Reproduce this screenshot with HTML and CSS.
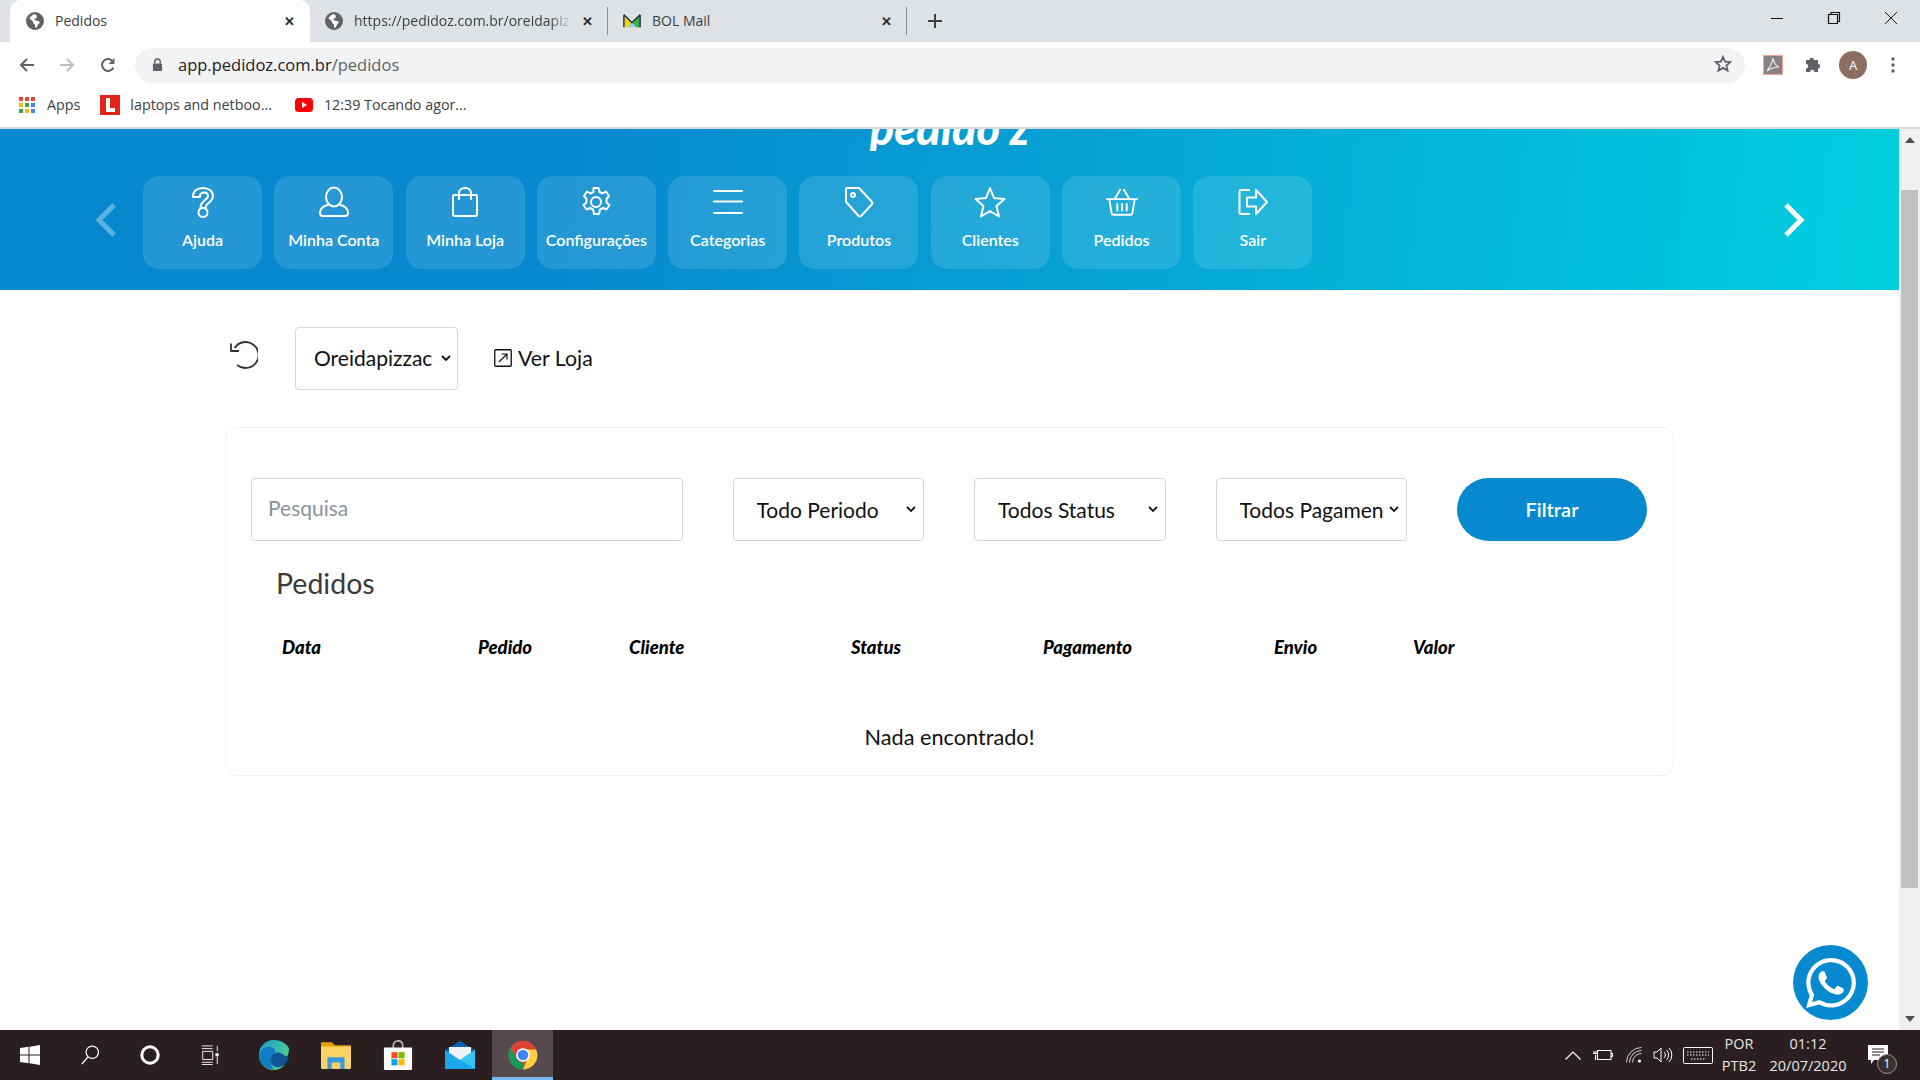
FILE: index.html
```html
<!DOCTYPE html>
<html lang="pt-BR">
<head>
  <meta charset="UTF-8" />
  <title>Pedidos</title>
  <link rel="stylesheet" href="styles.css">
</head>
<body>

  <!-- Browser tabs -->
  <div class="tabstrip">
    <div class="tab active">
      <svg class="favicon" viewBox="0 0 18 18"><circle cx="9" cy="9" r="9" fill="#5f6368"/><path d="M9 2c-2 .4-4.600 2-5.500 4.500L7 9.500v1.300l2 2v2.700c1 .2 2 0 2-.5l1-2.500 2-2-1.500-1.500-3-.5L8 7l2-.5 1-2.500z" fill="#fff"/></svg>
      <span class="tab-title">Pedidos</span>
      <span class="tab-close">✕</span>
    </div>
    <div class="tab second">
      <svg class="favicon" viewBox="0 0 18 18"><circle cx="9" cy="9" r="9" fill="#5f6368"/><path d="M9 2c-2 .4-4.600 2-5.500 4.500L7 9.500v1.300l2 2v2.700c1 .2 2 0 2-.5l1-2.500 2-2-1.500-1.500-3-.5L8 7l2-.5 1-2.500z" fill="#fff"/></svg>
      <span class="tab-title fade">https://pedidoz.com.br/oreidapizza</span>
      <span class="tab-close">✕</span>
    </div>
    <div class="tab third">
      <svg class="favicon" viewBox="0 0 20 18"><path d="M1 2l9 9 9-9v14H1z" fill="#f2d21c"/><path d="M10 11l9-9v14h-5z" fill="#39b54a"/><path d="M5 16l5-6 5 6z" fill="#8fd3e8"/><path d="M1 2l9 9 9-9M1 2v14M19 2v14" fill="none" stroke="#24313f" stroke-width="1.600"/></svg>
      <span class="tab-title">BOL Mail</span>
      <span class="tab-close">✕</span>
    </div>
    <svg class="new-tab" viewBox="0 0 14 14"><path d="M7 0v14M0 7h14" stroke="#3c4043" stroke-width="2"/></svg>
    <div class="window-controls">
      <svg viewBox="0 0 14 14"><path d="M1 7.500h12" stroke="#111" stroke-width="1"/></svg>
      <svg viewBox="0 0 14 14"><path d="M1.500 3.500h9v9h-9zM4 3.500V1.500h8.500v9h-2" fill="none" stroke="#111" stroke-width="1.200"/></svg>
      <svg viewBox="0 0 14 14"><path d="M1 1l12 12M13 1L1 13" stroke="#111" stroke-width="1"/></svg>
    </div>
  </div>

  <!-- Address bar -->
  <div class="toolbar">
    <svg class="nav-icon" viewBox="0 0 16 16"><path d="M15 8H2M8 2L2 8l6 6" fill="none" stroke="#5f6368" stroke-width="2"/></svg>
    <svg class="nav-icon" viewBox="0 0 16 16"><path d="M1 8h13M8 2l6 6-6 6" fill="none" stroke="#b9bcc0" stroke-width="2"/></svg>
    <svg class="nav-icon" viewBox="0 0 16 16"><path d="M13.500 10.500A6 6 0 1 1 13 4.500" fill="none" stroke="#5f6368" stroke-width="2"/><path d="M14.500 1v6h-6z" fill="#5f6368"/></svg>
    <div class="omnibox">
      <svg class="lock" viewBox="0 0 12 14"><path d="M3 6V4a3 3 0 0 1 6 0v2" fill="none" stroke="#5f6368" stroke-width="1.500"/><rect x="1" y="6" width="10" height="8" rx="1" fill="#5f6368"/></svg>
      <span class="url">app.pedidoz.com.br<span class="url-path">/pedidos</span></span>
      <svg class="star" viewBox="0 0 18 18"><path d="M9 1.800l2.100 4.800 5.200.5-3.900 3.400 1.200 5.100L9 12.900l-4.600 2.700 1.200-5.100-3.900-3.400 5.200-.5z" fill="none" stroke="#5f6368" stroke-width="1.800"/></svg>
    </div>
    <div class="extensions">
      <svg class="ext-pdf" viewBox="0 0 20 20"><rect width="20" height="20" fill="#8a8080"/><rect x=".5" y=".5" width="19" height="19" fill="none" stroke="#f4a49b"/><path d="M10 3c-.5 5-3 9-6 13 4-3 8-4 12-4-3-1-5-4-6-9z" fill="none" stroke="#eee" stroke-width="1.200"/></svg>
      <svg class="ext-puzzle" viewBox="0 0 18 18"><path d="M3 4h3.500a2.200 2.200 0 0 1 4.400 0H15v4a2.200 2.200 0 0 1 0 4.400V16h-3.500a2.200 2.200 0 0 0-4.400 0H3v-3.500a2.200 2.200 0 0 0 0-4.400z" fill="#5f6368"/></svg>
      <span class="avatar">A</span>
      <svg class="ext-menu" viewBox="0 0 4 16"><circle cx="2" cy="2" r="1.700" fill="#5f6368"/><circle cx="2" cy="8" r="1.700" fill="#5f6368"/><circle cx="2" cy="14" r="1.700" fill="#5f6368"/></svg>
    </div>
  </div>

  <!-- Bookmarks -->
  <div class="bookmarks">
    <a class="bookmark apps" href="#">
      <svg viewBox="0 0 16 16">
        <rect width="4" height="4" fill="#ea4335"/><rect x="6" width="4" height="4" fill="#ea4335"/><rect x="12" width="4" height="4" fill="#ea4335"/>
        <rect y="6" width="4" height="4" fill="#fbbc05"/><rect x="6" y="6" width="4" height="4" fill="#34a853"/><rect x="12" y="6" width="4" height="4" fill="#4285f4"/>
        <rect y="12" width="4" height="4" fill="#34a853"/><rect x="6" y="12" width="4" height="4" fill="#fbbc05"/><rect x="12" y="12" width="4" height="4" fill="#4285f4"/>
      </svg>
      Apps
    </a>
    <a class="bookmark laptops" href="#">
      <svg viewBox="0 0 20 20"><rect width="20" height="20" fill="#e1251b"/><path d="M6 3h4v10h5v4H6z" fill="#fff"/></svg>
      laptops and netboo...
    </a>
    <a class="bookmark youtube" href="#">
      <svg viewBox="0 0 18 14"><rect width="18" height="14" rx="3.500" fill="#f00"/><path d="M7 4l5 3-5 3z" fill="#fff"/></svg>
      12:39 Tocando agor...
    </a>
  </div>

  <!-- Page -->
  <div class="viewport">
    <div class="page">

      <header class="banner">
        <div class="logo"><span>pedido z</span></div>
        <div class="menu">
          <svg class="arrow" viewBox="0 0 22 36"><path d="M19 3L4 18l15 15" fill="none" stroke="#fff" stroke-opacity=".35" stroke-width="5"/></svg>
          <nav class="tiles">
            <a class="tile" href="#">
              <svg viewBox="0 0 32 32"><path d="M6 11v-1C6 5.500 10 2 16 2s10 3.500 10 8c0 3.500-2.500 5.500-5 7.500-1.500 1.200-2.500 2.500-2.500 4.500h-5c0-3.500 1.500-5.500 4-7.500 2-1.500 3.500-3 3.500-4.500 0-2-1.500-3.500-4-3.500s-4 1.500-4 3.500v1z"/><circle cx="16" cy="26.500" r="4.500"/></svg>
              Ajuda
            </a>
            <a class="tile" href="#">
              <svg viewBox="0 0 32 32"><ellipse cx="16" cy="11" rx="8" ry="9.500"/><path d="M11 18.500C5 20 2 23 2 26.500 2 29 3.500 30 5 30h22c1.500 0 3-1 3-3.500 0-3.500-3-6.500-9-8"/></svg>
              Minha Conta
            </a>
            <a class="tile" href="#">
              <svg viewBox="0 0 32 32"><path d="M5 9h22c1 0 1 .5 1 1v18c0 1.500-1 2-2 2H6c-1 0-2-.5-2-2V10c0-.5 0-1 1-1zM10 13V7c0-3 2.500-5 6-5s6 2 6 5v6"/></svg>
              Minha Loja
            </a>
            <a class="tile" href="#">
              <svg viewBox="0 0 32 32"><circle cx="16" cy="16" r="5"/><path d="M13.500 2h5l1 4 3 1.500 3.500-2 3 4.500-2.500 3v3.500l3 2.500-3 4.500-3.500-1.500-3 1.500-1 4.500h-5l-1-4.500-3-1.500-3.500 1.500-3-4.500 3-2.500v-3.500l-2.500-3 3-4.500 3.500 2 3-1.500z"/></svg>
              Configurações
            </a>
            <a class="tile" href="#">
              <svg viewBox="0 0 32 32"><path d="M2 5h28M2 15.500h28M2 27h28"/></svg>
              Categorias
            </a>
            <a class="tile" href="#">
              <svg viewBox="0 0 32 32"><path d="M4 2h11c1 0 1.500.3 2 1l12 13c.7.800.7 1.500 0 2.300L18 30c-.8.800-1.700.8-2.400 0L4 17c-.6-.6-1-1.200-1-2V3c0-.6.400-1 1-1z"/><circle cx="10" cy="9" r="2"/></svg>
              Produtos
            </a>
            <a class="tile" href="#">
              <svg viewBox="0 0 32 32"><path d="M16 2l4 10 10.500 1-8 7 2.500 10.500-9-5.500-9 5.500L9.500 20l-8-7L12 12z"/></svg>
              Clientes
            </a>
            <a class="tile" href="#">
              <svg viewBox="0 0 34 32"><path d="M1 13h32M3.500 13l2.500 15c.2 1 .8 1.500 2 1.500h18c1.200 0 1.800-.5 2-1.500l2.500-15M9 13l6-10M25 13L19 3M12 18v7M17 18v7M22 18v7"/></svg>
              Pedidos
            </a>
            <a class="tile" href="#">
              <svg viewBox="0 0 32 32"><path d="M12 4H4c-1 0-1.500.5-1.500 1.500v21c0 1 .5 1.500 1.500 1.500h8M10 11.500h9V4l11 12-11 12v-7.500h-9z"/></svg>
              Sair
            </a>
          </nav>
          <svg class="arrow" viewBox="0 0 22 36"><path d="M3 3l15 15L3 33" fill="none" stroke="#fff" stroke-width="5"/></svg>
        </div>
      </header>

      <div class="store-bar">
        <svg class="reset" viewBox="0 0 28 28"><path d="M6 5.500A13 13 0 1 1 5.500 22.500" transform="rotate(-10 14 14)" fill="none" stroke="#333" stroke-width="1.800"/><path d="M1 2.500v7.500h8" fill="none" stroke="#333" stroke-width="1.800"/></svg>
        <select class="field store-select">
          <option>Oreidapizzaconta</option>
        </select>
        <a class="store-link" href="#">
          <svg viewBox="0 0 18 18"><rect x=".75" y=".75" width="16.500" height="16.500" rx="1" fill="none" stroke="#111" stroke-width="1.300"/><path d="M5 13l8-8M7.500 5H13v5.500" fill="none" stroke="#111" stroke-width="1.200"/></svg>
          Ver Loja
        </a>
      </div>

      <section class="card">
        <div class="filters">
          <input class="field search" type="text" placeholder="Pesquisa">
          <select class="field filter"><option>Todo Periodo</option></select>
          <select class="field filter"><option>Todos Status</option></select>
          <select class="field filter"><option>Todos Pagamentos</option></select>
          <button class="btn-filter">Filtrar</button>
        </div>
        <h2>Pedidos</h2>
        <div class="table-head">
          <span>Data</span>
          <span>Pedido</span>
          <span>Cliente</span>
          <span>Status</span>
          <span>Pagamento</span>
          <span>Envio</span>
          <span>Valor</span>
        </div>
        <p class="empty">Nada encontrado!</p>
      </section>

      <a class="whatsapp" href="#">
        <svg viewBox="0 0 24 24"><path fill="#fff" d="M17.472 14.382c-.297-.149-1.758-.867-2.030-.967-.273-.099-.471-.148-.670.150-.197.297-.767.966-.940 1.164-.173.199-.347.223-.644.075-.297-.150-1.255-.463-2.390-1.475-.883-.788-1.480-1.761-1.653-2.059-.173-.297-.018-.458.130-.606.134-.133.298-.347.446-.520.149-.174.198-.298.298-.497.099-.198.050-.371-.025-.520-.075-.149-.669-1.612-.916-2.207-.242-.579-.487-.500-.669-.510-.173-.008-.371-.010-.570-.010-.198 0-.520.074-.792.372-.272.297-1.040 1.016-1.040 2.479 0 1.462 1.065 2.875 1.213 3.074.149.198 2.096 3.200 5.077 4.487.709.306 1.262.489 1.694.625.712.227 1.360.195 1.871.118.571-.085 1.758-.719 2.006-1.413.248-.694.248-1.289.173-1.413-.074-.124-.272-.198-.570-.347m-5.421 7.403h-.004a9.870 9.870 0 0 1-5.031-1.378l-.361-.214-3.741.982.998-3.648-.235-.374a9.860 9.860 0 0 1-1.510-5.260c.001-5.450 4.436-9.884 9.888-9.884 2.640 0 5.122 1.030 6.988 2.898a9.825 9.825 0 0 1 2.893 6.994c-.003 5.450-4.437 9.884-9.885 9.884m8.413-18.297A11.815 11.815 0 0 0 12.050 0C5.495 0 .160 5.335.157 11.892c0 2.096.547 4.142 1.588 5.945L.057 24l6.305-1.654a11.882 11.882 0 0 0 5.683 1.448h.005c6.554 0 11.890-5.335 11.893-11.893a11.821 11.821 0 0 0-3.480-8.413z"/></svg>
      </a>
    </div>

    <div class="scrollbar">
      <svg viewBox="0 0 10 6"><path d="M5 0l5 6H0z" fill="#505050"/></svg>
      <div class="scroll-track"><div class="scroll-thumb"></div></div>
      <svg viewBox="0 0 10 6"><path d="M0 0h10L5 6z" fill="#505050"/></svg>
    </div>
  </div>

  <!-- Windows taskbar -->
  <footer class="taskbar">
    <div class="task-cell">
      <svg viewBox="0 0 20 20"><path d="M0 3l8.500-1.200v7.700H0zM9.500 1.700L20 0v9.500H9.500zM0 10.500h8.500v7.700L0 17zM9.500 10.500H20V20L9.500 18.300z" fill="#fff"/></svg>
    </div>
    <div class="task-cell">
      <svg viewBox="0 0 20 22"><circle cx="12.500" cy="8" r="6.800" fill="none" stroke="#fff" stroke-width="1.300"/><path d="M8 13L1 21" stroke="#fff" stroke-width="1.500"/></svg>
    </div>
    <div class="task-cell">
      <svg viewBox="0 0 20 20"><circle cx="10" cy="10" r="8.200" fill="none" stroke="#fff" stroke-width="3"/></svg>
    </div>
    <div class="task-cell">
      <svg viewBox="0 0 20 22"><path d="M1 1h12M1 4h12M2 7h11v9H2zM1 19h12M1 21.500h12M18 1v6M18 13v8" fill="none" stroke="#fff" stroke-width="1"/><rect x="16" y="9" width="3.500" height="3.500" fill="#fff"/></svg>
    </div>
    <div class="task-apps">
      <div class="task-cell app">
        <svg viewBox="0 0 30 30"><defs><linearGradient id="edgeTop" x1="0" y1="0" x2="1" y2="1"><stop offset="0" stop-color="#1b9fd8"/><stop offset="1" stop-color="#5fdc6e"/></linearGradient></defs><path d="M15 0C7 0 0 6 0 15c0 8 6 15 14 15 5 0 9-2 12-5-5 2-11 1-13-3-1-3 0-5 2-7 2-1.500 6-2 8-.5 2 1 3 2 5 2 1.500-2 2-5 2-8C29 5 23 0 15 0z" fill="url(#edgeTop)"/><path d="M1 13C3 8 8 6 12 7c3 1 5 3 4 6-3 1-5 3-5 6s1 7 4 10.500C7 30 0 24 0 15z" fill="#0f7cc4"/><path d="M11 19c0-3 2-5 5-6 4-1 7.500 0 9 2 2 2 4 2 5 0-1 6-4 10-8 12-5 1.500-11-.5-11-8z" fill="#0c59a4" opacity=".9"/></svg>
      </div>
      <div class="task-cell app">
        <svg viewBox="0 0 28 28"><path d="M0 3c0-.6.400-1 1-1h9l3 3h14c.6 0 1 .4 1 1v4H0z" fill="#e3a008"/><path d="M0 6h28v20c0 .6-.4 1-1 1H1c-.6 0-1-.4-1-1z" fill="#fcd265"/><path d="M6 27V17c0-.6.400-1 1-1h14c.6 0 1 .4 1 1v10h-4v-6h-8v6z" fill="#3a9be0"/></svg>
      </div>
      <div class="task-cell app">
        <svg viewBox="0 0 30 32"><path d="M10 9V6c0-3 2-5 5-5s5 2 5 5v3" fill="none" stroke="#bbb" stroke-width="1.800"/><rect y="8" width="30" height="24" rx="1" fill="#fff"/><rect x="8" y="13" width="6.500" height="6.500" fill="#f25022"/><rect x="15.500" y="13" width="6.500" height="6.500" fill="#7fba00"/><rect x="8" y="20.500" width="6.500" height="6.500" fill="#00a4ef"/><rect x="15.500" y="20.500" width="6.500" height="6.500" fill="#ffb900"/></svg>
      </div>
      <div class="task-cell app">
        <svg viewBox="0 0 30 28"><path d="M15 0l15 9v19H0V9z" fill="#0a5fb0"/><path d="M4 6h22v10L15 21 4 16z" fill="#f0f4f8"/><path d="M0 9l15 10 15-10v19H0z" fill="#1ca7ec"/><path d="M15 19l15-10v19z" fill="#35c6f4"/></svg>
      </div>
      <div class="task-cell app running">
        <svg viewBox="0 0 48 48"><circle cx="24" cy="24" r="23" fill="#db4437"/><path d="M24 47A23 23 0 0 1 4 12.500L15 31c2 3.500 5 5 9 5z" fill="#0f9d58"/><path d="M24 47c13 0 23-10 23-23 0-3-.5-6-2-9H24c5 0 9 4 9 9 0 2-.5 3.500-1.500 5z" fill="#ffcd40"/><circle cx="24" cy="24" r="11" fill="#fff"/><circle cx="24" cy="24" r="8.500" fill="#4285f4"/></svg>
      </div>
    </div>
    <div class="tray">
      <svg class="tray-caret" viewBox="0 0 16 9"><path d="M.5 8.500L8 1l7.500 7.500" fill="none" stroke="#fff" stroke-width="1.200"/></svg>
      <svg class="tray-battery" viewBox="0 0 20 12"><path d="M4.500 1.500h13.500v9H4.500zM18 4.500h1.500v3H18M0 4.500h4.500M1 2v2.500M3 2v2.500M2.500 6v5" fill="none" stroke="#fff" stroke-width="1.100"/></svg>
      <svg class="tray-wifi" viewBox="0 0 16 16"><path d="M.5 15.500a15 15 0 0 1 15-15M3.500 15.500a12 12 0 0 1 12-12M6.500 15.500a9 9 0 0 1 9-9" fill="none" stroke="#cfcfcf" stroke-width="1"/><circle cx="13.500" cy="14" r="1.600" fill="#fff"/></svg>
      <svg class="tray-sound" viewBox="0 0 20 16"><path d="M1 5h3l4-4v14l-4-4H1zM11 5a4 4 0 0 1 0 6M13.500 3a7 7 0 0 1 0 10M16 1a10 10 0 0 1 0 14" fill="none" stroke="#fff" stroke-width="1"/></svg>
      <svg class="tray-keyboard" viewBox="0 0 30 17"><rect x=".5" y=".5" width="29" height="16" rx="1" fill="none" stroke="#fff"/><path d="M4 5h22M4 8h22M8 12h14" stroke="#fff" stroke-width="1" stroke-dasharray="1.500 1.500"/></svg>
      <div class="tray-text lang"><span>POR</span><span>PTB2</span></div>
      <div class="tray-text clock"><span>01:12</span><span>20/07/2020</span></div>
      <div class="notify">
        <svg viewBox="0 0 20 20"><path d="M0 0h20v15H6l-3 4v-4H0z" fill="#fff"/><path d="M4 4h12M4 7h12M4 10h8" stroke="#2a1e20" stroke-width="1"/></svg>
        <span class="notify-badge">1</span>
      </div>
    </div>
  </footer>

</body>
</html>
```

FILE: styles.css
```css
html, body {
  margin: 0;
  padding: 0;
  height: 100%;
  overflow: hidden;
  font-family: 'Lato', sans-serif;
  color: #111;
  background: white;
}

body {
  display: flex;
  flex-direction: column;
}

a {
  color: inherit;
  text-decoration: none;
}

/* Browser chrome */
.tabstrip {
  height: 42px;
  flex-shrink: 0;
  display: flex;
  align-items: center;
  background: #dee1e6;
  font-family: 'Open Sans', sans-serif;
  font-size: 14px;
  color: #3c4043;
}

.tab {
  height: 100%;
  display: flex;
  align-items: center;
  box-sizing: border-box;
}

.tab.active {
  width: 300px;
  margin-left: 10px;
  padding: 0 14px 0 16px;
  background: white;
  border-radius: 10px 10px 0 0;
}

.tab.second {
  width: 298px;
  padding: 0 13px 0 15px;
  border-right: 1px solid #8a8d91;
  height: 28px;
}

.tab.third {
  width: 299px;
  padding: 0 13px 0 15px;
  border-right: 1px solid #8a8d91;
  height: 28px;
}

.favicon {
  width: 18px;
  height: 18px;
  flex-shrink: 0;
  margin-right: 11px;
}

.tab-title {
  flex: 1;
  padding-bottom: 1px;
  white-space: nowrap;
  overflow: hidden;
}

.tab-title.fade {
  -webkit-mask-image: linear-gradient(90deg, black 90%, transparent);
  mask-image: linear-gradient(90deg, black 90%, transparent);
}

.tab-close {
  width: 14px;
  margin-left: 8px;
  font-size: 13px;
  font-weight: 700;
  text-align: center;
  color: #26282b;
}

.new-tab {
  width: 14px;
  height: 14px;
  margin-left: 21px;
}

.window-controls {
  margin-left: auto;
  margin-right: 22px;
  margin-top: -6px;
  display: flex;
  gap: 43px;
}

.window-controls svg {
  width: 14px;
  height: 14px;
}

.toolbar {
  height: 43px;
  flex-shrink: 0;
  display: flex;
  align-items: center;
  padding-left: 19px;
  box-sizing: border-box;
  background: white;
  padding-top: 3px;
}

.nav-icon {
  width: 16px;
  height: 16px;
  margin-right: 24px;
}

.nav-icon:nth-child(2) {
  margin-right: 25px;
}

.nav-icon:nth-child(3) {
  margin-right: 19px;
}

.omnibox {
  width: 1610px;
  height: 35px;
  box-sizing: border-box;
  display: flex;
  align-items: center;
  padding: 0 13px 2px 17px;
  border-radius: 18px;
  background: #f1f3f4;
  font-family: 'Open Sans', sans-serif;
  font-size: 16.5px;
  color: #202124;
}

.lock {
  width: 11px;
  height: 13px;
  margin-right: 15px;
}

.url {
  flex: 1;
}

.url-path {
  color: #5f6368;
}

.star {
  width: 18px;
  height: 18px;
}

.extensions {
  display: flex;
  align-items: center;
  margin-left: 18px;
}

.ext-pdf {
  width: 20px;
  height: 20px;
  margin-right: 20px;
}

.ext-puzzle {
  width: 18px;
  height: 18px;
  margin-right: 18px;
}

.avatar {
  width: 28px;
  height: 28px;
  margin-right: 24px;
  border-radius: 50%;
  background: #8d6e63;
  color: white;
  font-family: 'Open Sans', sans-serif;
  font-size: 13px;
  line-height: 28px;
  text-align: center;
}

.ext-menu {
  width: 4px;
  height: 16px;
}

.bookmarks {
  height: 44px;
  flex-shrink: 0;
  box-sizing: border-box;
  display: flex;
  align-items: center;
  padding: 0 0 3px 19px;
  background: white;
  border-bottom: 2px solid #d9dadc;
  font-family: 'Open Sans', sans-serif;
  font-size: 14.3px;
  color: #3c4043;
}

.bookmark {
  display: flex;
  align-items: center;
}

.bookmark.apps {
  margin-right: 20px;
}

.bookmark.laptops {
  margin-right: 23px;
}

.bookmark.apps svg {
  width: 16px;
  height: 16px;
  margin-right: 12px;
}

.bookmark.laptops svg {
  width: 20px;
  height: 20px;
  margin-right: 10px;
}

.bookmark.youtube svg {
  width: 18px;
  height: 14px;
  margin-right: 11px;
}

/* Page */
.viewport {
  flex: 1;
  min-height: 0;
  display: flex;
}

.page {
  flex: 1;
  position: relative;
  min-width: 0;
}

.banner {
  height: 161px;
  box-sizing: border-box;
  background: linear-gradient(97deg, #0789cf 0%, #0789cf 30%, #06a5d4 60%, #00cfdf 100%);
}

.logo {
  height: 22px;
  overflow: hidden;
  display: flex;
  justify-content: center;
  align-items: flex-end;
  margin-bottom: 25px;
  color: white;
  font-size: 45px;
  font-weight: 900;
  font-style: italic;
  line-height: 45px;
}

.menu {
  display: flex;
  align-items: center;
  padding: 0 94px 0 95px;
}

.arrow {
  width: 22px;
  height: 36px;
  flex-shrink: 0;
  margin-bottom: 6px;
}

.tiles {
  flex: 1;
  display: flex;
  gap: 12.3px;
  margin-left: 26px;
}

.tile {
  width: 119px;
  height: 93px;
  box-sizing: border-box;
  padding-top: 10px;
  display: flex;
  flex-direction: column;
  align-items: center;
  gap: 12px;
  border-radius: 16px;
  background: rgba(255, 255, 255, 0.12);
  color: white;
  font-size: 16px;
  font-weight: 600;
}

.tile svg {
  width: 32px;
  height: 32px;
  fill: none;
  stroke: white;
  stroke-width: 2;
  stroke-linejoin: round;
  stroke-linecap: round;
}

.store-bar {
  display: flex;
  align-items: center;
  margin-top: 37px;
  padding-left: 230px;
}

.reset {
  width: 28px;
  height: 28px;
  margin-right: 37px;
  margin-top: -8px;
}

.field {
  height: 63px;
  box-sizing: border-box;
  border: 1px solid #ced9e0;
  border-radius: 4px;
  background: white;
  font-family: 'Lato', sans-serif;
  font-size: 21px;
  color: #111;
  outline: none;
}

select.field {
  appearance: none;
  -webkit-appearance: none;
  background-image: url("data:image/svg+xml,%3Csvg xmlns='http://www.w3.org/2000/svg' viewBox='0 0 10 7'%3E%3Cpath d='M1 1l4 4 4-4' fill='none' stroke='%23111' stroke-width='1.800'/%3E%3C/svg%3E");
  background-repeat: no-repeat;
  background-size: 10px 7px;
}

.store-select {
  width: 163px;
  padding: 0 24px 2px 18px;
  background-position: right 6px center;
}

.store-link {
  display: flex;
  align-items: center;
  gap: 6px;
  margin: 0 0 2px 36px;
  font-size: 21.3px;
}

.store-link svg {
  width: 18px;
  height: 18px;
}

.card {
  width: 1449px;
  height: 349px;
  box-sizing: border-box;
  margin: 37px 0 0 225px;
  padding: 50px 25px 0;
  border: 1px solid #eef0f2;
  border-radius: 12px;
}

.filters {
  display: flex;
  gap: 50px;
}

.search {
  width: 431.5px;
  padding: 0 16px 4px;
}

.search::placeholder {
  color: #8a939b;
}

.filter {
  width: 191.5px;
  padding: 0 22px 0 23px;
  background-position: right 7px center;
}

.btn-filter {
  width: 190px;
  height: 63px;
  padding-bottom: 3px;
  border: none;
  border-radius: 32px;
  background: #0789cf;
  color: white;
  font-family: 'Lato', sans-serif;
  font-size: 20px;
  font-weight: 600;
}

h2 {
  margin: 25px 0 0 25px;
  font-size: 28.5px;
  font-weight: 400;
  line-height: 34px;
  color: #3a3a3a;
}

.table-head {
  display: grid;
  grid-template-columns: 196px 151px 222px 192px 231px 139px 1fr;
  margin: 36px 0 0 25px;
  padding-left: 6px;
  font-size: 18.5px;
  font-weight: 900;
  font-style: italic;
  line-height: 22px;
  color: #000;
}

.empty {
  margin: 66px 0 0 0;
  font-size: 21.7px;
  line-height: 26px;
  text-align: center;
}

.whatsapp {
  position: absolute;
  left: 1793px;
  top: 816px;
  width: 75px;
  height: 75px;
  display: flex;
  align-items: center;
  justify-content: center;
  border-radius: 50%;
  background: #0789cf;
}

.whatsapp svg {
  width: 50px;
  height: 50px;
}

.scrollbar {
  width: 21px;
  flex-shrink: 0;
  display: flex;
  flex-direction: column;
  align-items: center;
  padding: 8px 0;
  box-sizing: border-box;
  background: #f0f0f0;
}

.scrollbar svg {
  width: 10px;
  height: 6px;
}

.scroll-track {
  flex: 1;
  width: 100%;
  box-sizing: border-box;
  padding: 47px 2px 128px;
}

.scroll-thumb {
  height: 100%;
  background: #c1c1c1;
}

/* Taskbar */
.taskbar {
  height: 50px;
  flex-shrink: 0;
  display: flex;
  align-items: center;
  background: #2a1e20;
  color: #e8e6e6;
  font-family: 'Open Sans', sans-serif;
  font-size: 14.5px;
}

.task-cell {
  width: 60px;
  height: 50px;
  display: flex;
  align-items: center;
  justify-content: center;
  box-sizing: border-box;
}

.task-cell svg {
  width: 20px;
  height: 20px;
}

.task-apps {
  display: flex;
  margin-left: 3px;
}

.task-cell.app {
  width: 62px;
}

.task-cell.app svg {
  width: 30px;
  height: 30px;
}

.task-cell.running {
  width: 61px;
  margin-left: 1px;
  background: #564a4c;
  border-bottom: 3px solid #76b9ed;
  padding-top: 3px;
}

.tray {
  margin-left: auto;
  display: flex;
  align-items: center;
  height: 100%;
  padding-right: 32px;
}

.tray-caret {
  width: 16px;
  height: 9px;
  margin-right: 12px;
}

.tray-battery {
  width: 20px;
  height: 12px;
  margin-right: 13px;
}

.tray-wifi {
  width: 16px;
  height: 16px;
  margin-right: 11px;
}

.tray-sound {
  width: 20px;
  height: 16px;
  margin-right: 10px;
}

.tray-keyboard {
  width: 30px;
  height: 17px;
}

.tray-text {
  display: flex;
  flex-direction: column;
  align-items: center;
  line-height: 22px;
}

.lang {
  width: 52px;
  margin-right: 2px;
}

.clock {
  width: 82px;
  margin-right: 19px;
}

.notify {
  position: relative;
  width: 20px;
  height: 20px;
}

.notify svg {
  width: 20px;
  height: 20px;
  display: block;
}

.notify-badge {
  position: absolute;
  left: 9px;
  top: 9px;
  width: 18px;
  height: 18px;
  border-radius: 50%;
  background: #3a3032;
  border: 1px solid #9a9596;
  font-size: 12px;
  line-height: 18px;
  text-align: center;
  color: white;
}
```
